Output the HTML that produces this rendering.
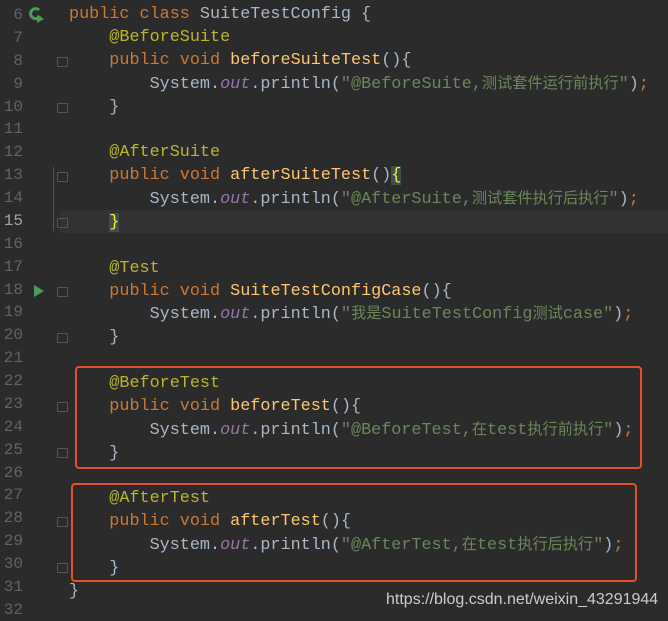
<!DOCTYPE html>
<html><head><meta charset="utf-8"><style>
html,body{margin:0;padding:0;background:#2b2b2b;width:668px;height:621px;overflow:hidden;position:relative}
.ln{position:absolute;left:0;top:4px;width:23px;text-align:right;font:16px/22.88px "Liberation Mono",monospace;color:#606366}
.code{position:absolute;left:69px;top:4px;font:16.8px/22.88px "Liberation Mono","Noto Sans CJK SC",monospace;color:#a9b7c6;white-space:pre}
.k{color:#cc7832}.a{color:#bbb529}.m{color:#ffc66d}.s{color:#6a8759}.o{color:#9876aa;font-style:italic}
.c{font-size:15.2px}
.hl{position:absolute;left:60px;right:0;top:210px;height:23px;background:#323232}
.box{position:absolute;border:2px solid #e4502a;border-radius:4px}
.fold{position:absolute;left:57px;width:9px;height:8px;border:1px solid #555;border-radius:1px}
.wm{position:absolute;left:386px;top:591px;font:16px "Liberation Sans",sans-serif;color:#ccc}
</style></head><body>
<div class="hl"></div>
<div style="position:absolute;left:53px;top:167px;width:1px;height:64px;background:#3d5e57"></div>
<div class="ln">6<br>7<br>8<br>9<br>10<br>11<br>12<br>13<br>14<br><span style="color:#a4a3a3">15</span><br>16<br>17<br>18<br>19<br>20<br>21<br>22<br>23<br>24<br>25<br>26<br>27<br>28<br>29<br>30<br>31<br>32</div>
<svg style="position:absolute;left:28px;top:6px" width="18" height="18"><path d="M11 4a5 5 0 1 0 1 6" stroke="#499c54" stroke-width="3" fill="none"/><path d="M9 9l7 4-7 4z" fill="#499c54"/></svg>
<svg style="position:absolute;left:33px;top:284px" width="12" height="14"><path d="M1 1l10 6-10 6z" fill="#499c54"/></svg>
<div class="fold" style="top:57px"></div><div class="fold" style="top:103px"></div>
<div class="fold" style="top:172px"></div><div class="fold" style="top:218px"></div>
<div class="fold" style="top:287px"></div><div class="fold" style="top:333px"></div>
<div class="fold" style="top:402px"></div><div class="fold" style="top:448px"></div>
<div class="fold" style="top:517px"></div><div class="fold" style="top:563px"></div>
<div class="code"><span class="k">public class </span>SuiteTestConfig {
    <span class="a">@BeforeSuite</span>
    <span class="k">public void </span><span class="m">beforeSuiteTest</span>(){
        System.<span class="o">out</span>.println(<span class="s">"@BeforeSuite,<span class="c">测试套件运行前执行</span>"</span>)<span class="k">;</span>
    }

    <span class="a">@AfterSuite</span>
    <span class="k">public void </span><span class="m">afterSuiteTest</span>()<span style="background:#3b514d;color:#ffef28">{</span>
        System.<span class="o">out</span>.println(<span class="s">"@AfterSuite,<span class="c">测试套件执行后执行</span>"</span>)<span class="k">;</span>
    <span style="background:#3b514d;color:#ffef28">}</span>

    <span class="a">@Test</span>
    <span class="k">public void </span><span class="m">SuiteTestConfigCase</span>(){
        System.<span class="o">out</span>.println(<span class="s">"<span class="c">我是</span>SuiteTestConfig<span class="c">测试</span>case"</span>)<span class="k">;</span>
    }

    <span class="a">@BeforeTest</span>
    <span class="k">public void </span><span class="m">beforeTest</span>(){
        System.<span class="o">out</span>.println(<span class="s">"@BeforeTest,<span class="c">在</span>test<span class="c">执行前执行</span>"</span>)<span class="k">;</span>
    }

    <span class="a">@AfterTest</span>
    <span class="k">public void </span><span class="m">afterTest</span>(){
        System.<span class="o">out</span>.println(<span class="s">"@AfterTest,<span class="c">在</span>test<span class="c">执行后执行</span>"</span>)<span class="k">;</span>
    }
}
</div>
<div class="box" style="left:75px;top:366px;width:563px;height:99px"></div>
<div class="box" style="left:71px;top:483px;width:562px;height:95px"></div>
<div class="wm">https://blog.csdn.net/weixin_43291944</div>
</body></html>
